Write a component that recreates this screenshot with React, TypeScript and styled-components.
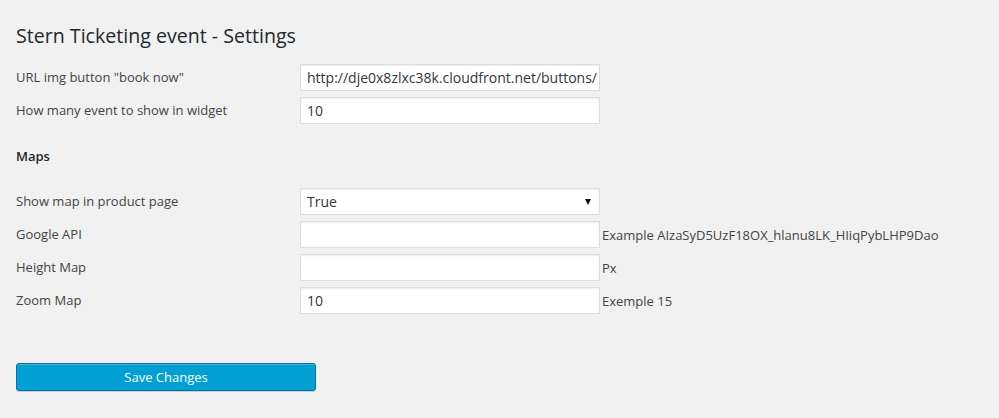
import styled, { createGlobalStyle } from 'styled-components'

const GlobalStyle = createGlobalStyle`
    html, body {
        margin: 0;
        padding: 0;
        background: #f1f1f1;
    }
    body {
        font-family: "Open Sans", "Liberation Sans", sans-serif;
        font-size: 13px;
        color: #444;
    }
`

const Page = styled.div`
    width: 999px;
    height: 418px;
    padding: 21px 16px 0;
    box-sizing: border-box;
`

const Title = styled.h1`
    margin: 0 0 14px;
    font-size: 19.6px;
    font-weight: 400;
    line-height: 29px;
    color: #23282d;
`

const FieldGrid = styled.div`
    display: grid;
    grid-template-columns: 284px 300px auto;
    row-gap: 6px;
    align-items: center;
`

const Label = styled.div`
    font-size: 13px;
    color: #444;
    line-height: 26px;
    padding-bottom: 1px;
`

const TextInput = styled.input`
    width: 300px;
    height: 27px;
    box-sizing: border-box;
    margin: 0;
    padding: 2px 1px 2px 6px;
    border: 1px solid #ddd;
    background: #fff;
    box-shadow: inset 0 1px 2px rgba(0, 0, 0, 0.07);
    font-family: "Open Sans", "Liberation Sans", sans-serif;
    font-size: 14px;
    color: #32373c;
    outline: none;
`

const SelectBox = styled.div`
    width: 300px;
    height: 27px;
    box-sizing: border-box;
    border: 1px solid #ddd;
    background: #fff;
    box-shadow: inset 0 1px 2px rgba(0, 0, 0, 0.07);
    display: flex;
    align-items: center;
    padding: 0 7px 0 6px;
    font-size: 14px;
    color: #32373c;
`

const Arrow = styled.span`
    margin-left: auto;
    width: 0;
    height: 0;
    border-left: 3.5px solid transparent;
    border-right: 3.5px solid transparent;
    border-top: 6px solid #111;
    margin-right: 1px;
`

const Hint = styled.span`
    padding-left: 2px;
    font-size: 13px;
    color: #444;
    white-space: nowrap;
`

const Section = styled.h2<{ $gapTop: number; $gapBottom: number }>`
    grid-column: 1 / -1;
    margin: ${p => p.$gapTop}px 0 ${p => p.$gapBottom}px;
    font-size: 13px;
    font-weight: 600;
    line-height: 20px;
    color: #23282d;
`

const SaveButton = styled.button`
    margin-top: 49px;
    width: 300px;
    height: 28px;
    border: 1px solid #0073aa;
    border-radius: 3px;
    background: #00a0d2;
    box-shadow: inset 0 1px 0 rgba(120, 200, 230, 0.5), 0 1px 0 rgba(0, 0, 0, 0.15);
    font-family: "Open Sans", "Liberation Sans", sans-serif;
    font-size: 13px;
    color: #fff;
    cursor: pointer;
`

interface FieldRow {
    label: string,
    value?: string,
    hint?: string,
    select?: boolean,
}

const generalRows: FieldRow[] = [
    { label: 'URL img button "book now"', value: 'http://dje0x8zlxc38k.cloudfront.net/buttons/book_now.png' },
    { label: 'How many event to show in widget', value: '10' },
]

const mapRows: FieldRow[] = [
    { label: 'Show map in product page', value: 'True', select: true },
    { label: 'Google API', value: '', hint: 'Example AIzaSyD5UzF18OX_hlanu8LK_HIiqPybLHP9Dao' },
    { label: 'Height Map', value: '', hint: 'Px' },
    { label: 'Zoom Map', value: '10', hint: 'Exemple 15' },
]

const renderRow = (row: FieldRow, index: number) => [
    <Label key={`l${index}`}>{row.label}</Label>,
    row.select
        ? <SelectBox key={`i${index}`}>{row.value}<Arrow /></SelectBox>
        : <TextInput key={`i${index}`} defaultValue={row.value} />,
    <Hint key={`h${index}`}>{row.hint}</Hint>,
]

export default function App() {
    return <>
        <GlobalStyle />
        <Page>
            <Title>Stern Ticketing event - Settings</Title>
            <FieldGrid>
                {generalRows.map((row, i) => renderRow(row, i))}
                <Section $gapTop={16} $gapBottom={16}>Maps</Section>
                {mapRows.map((row, i) => renderRow(row, i + 10))}
            </FieldGrid>
            <SaveButton>Save Changes</SaveButton>
        </Page>
    </>
}
